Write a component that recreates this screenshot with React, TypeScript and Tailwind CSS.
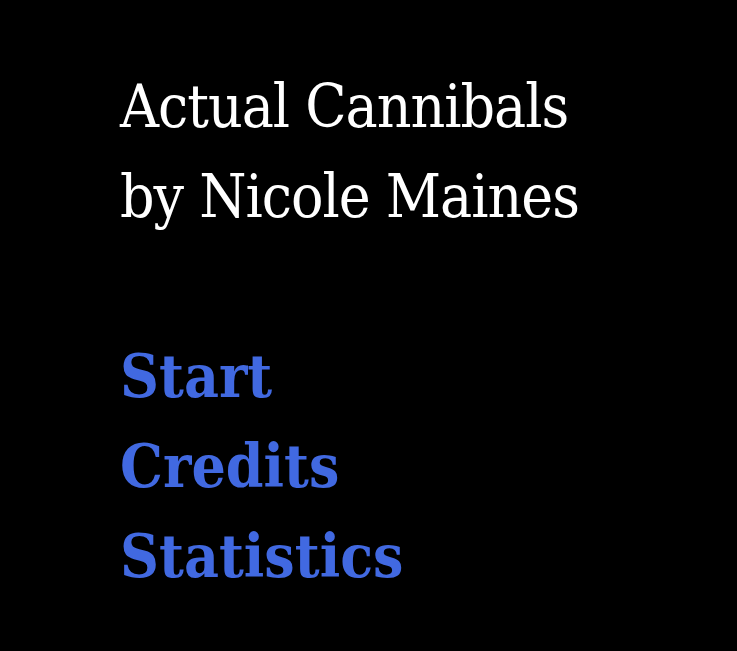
export default function App() {
  return (
    <div className="min-h-[651px] w-full bg-black pl-[120px] pt-[61px] font-['DejaVu_Serif_Condensed','DejaVu_Serif',serif]">
      <div className="flex flex-col text-[60px] leading-[90px] tracking-[-1px] text-white">
        <span>Actual Cannibals</span>
        <span>by Nicole Maines</span>
      </div>
      <nav className="mt-[90px] flex flex-col items-start text-[60px] font-bold leading-[90px] text-[#4169e1]">
        <a className="cursor-pointer">Start</a>
        <a className="cursor-pointer">Credits</a>
        <a className="cursor-pointer">Statistics</a>
      </nav>
    </div>
  );
}
